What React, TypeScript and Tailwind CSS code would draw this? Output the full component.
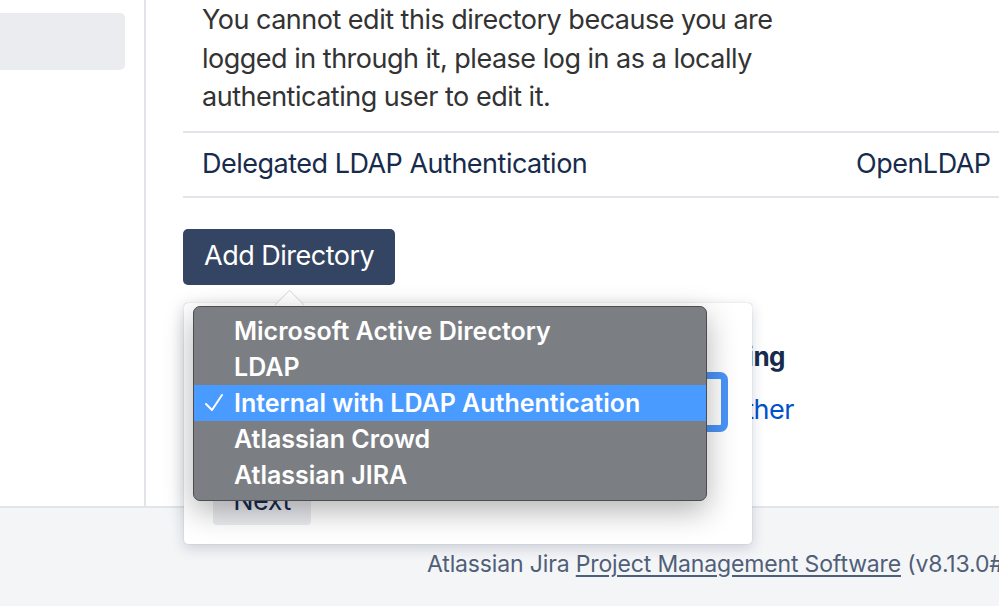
import React from 'react';

const menuItems = [
  'Microsoft Active Directory',
  'LDAP',
  'Internal with LDAP Authentication',
  'Atlassian Crowd',
  'Atlassian JIRA',
];

function CheckMark() {
  return (
    <svg width="18" height="18" viewBox="0 0 18 18" fill="none" className="absolute left-[11px] top-[9px]">
      <polyline points="1,10 7,16 17,1" stroke="white" strokeWidth="2" strokeLinecap="round" strokeLinejoin="round" />
    </svg>
  );
}

export default function App() {
  const selected = 'Internal with LDAP Authentication';

  return (
    <div className="relative h-[606px] w-[999px] overflow-hidden bg-white font-[family-name:Inter,sans-serif]">
      <div className="flex h-[506px]">
        <aside className="w-[146px] shrink-0 border-r-2 border-[#e1e3e8] pt-[13px]">
          <div className="h-[57px] w-[125px] rounded-r-[5px] bg-[#ebecf0]" />
        </aside>

        <main className="flex-1 overflow-hidden pl-[37px] tracking-[-0.5px]">
          <div className="w-[1000px]">
            <div className="whitespace-nowrap px-[19px] pb-[14px] pt-[1px] text-[27px] leading-[38.5px] text-[#333]">
              You cannot edit this directory because you are
              <br />
              logged in through it, please log in as a locally
              <br />
              authenticating user to edit it.
            </div>
            <div className="flex h-[67px] items-center border-y-2 border-[#e4e5ea] text-[27px] text-[#172b4d]">
              <div className="w-[654px] px-[19px]">Delegated LDAP Authentication</div>
              <div className="px-[19px]">OpenLDAP</div>
            </div>
            <div className="mt-[31px]">
              <button className="h-[56px] rounded-[5px] bg-[#344563] px-[21px] text-[27px] text-white">
                Add Directory
              </button>
            </div>

            {/* page content that sits behind the inline dialog */}
            <div className="mt-[56px] w-[602px] whitespace-nowrap text-right text-[26px] font-bold leading-[32px] text-[#172b4d]">
              Directory Syncing
            </div>
            <div className="mt-[22px] w-[611px] whitespace-nowrap text-right text-[27px] leading-[30px] text-[#0052cc]">
              Configure another
            </div>
          </div>
        </main>
      </div>

      <footer className="h-[100px] whitespace-nowrap border-t-2 border-[#e4e5ea] bg-[#f4f5f7] pl-[427px] pt-[41px] text-[23px] leading-[30px] tracking-[-0.15px] text-[#505f79]">
        Atlassian Jira <span className="underline underline-offset-[3px]">Project Management Software</span> (v8.13.0#813000-sha1:a4a7a4f)
      </footer>

      {/* inline dialog */}
      <div className="absolute left-[184px] top-[303px] h-[241px] w-[568px] rounded-[4px] bg-white shadow-[0_4px_14px_rgba(9,30,66,0.18),0_0_1px_rgba(9,30,66,0.35)]">
        <div className="absolute left-[95px] top-[-9px] h-[21px] w-[21px] rotate-45 border-l border-t border-[#dcdee3] bg-white" />
        <div className="relative pl-[29px] pt-[69px]">
          <div className="h-[60px] w-[515px] rounded-[8px] border-[7px] border-[#4a94f8] bg-white" />
          <button className="mt-[45px] flex h-[48px] w-[98px] items-center justify-center rounded-[4px] bg-[#ebecf0] text-[27px] tracking-[-0.5px] text-[#172b4d]">
            Next
          </button>
        </div>
      </div>

      {/* native select menu */}
      <div className="absolute left-[193px] top-[306px] h-[195px] w-[514px] rounded-[7px] border border-[#4d4d4f] bg-[#7b7e83] py-[6px] shadow-[0_10px_30px_rgba(0,0,0,0.3)]">
        {menuItems.map((item) => (
          <div
            key={item}
            className={`relative flex h-[36px] items-center pl-[40px] pt-[1px] text-[25px] font-semibold text-white ${
              item === selected ? 'bg-[#4a9bff]' : ''
            }`}
          >
            {item === selected && <CheckMark />}
            {item}
          </div>
        ))}
      </div>
    </div>
  );
}
